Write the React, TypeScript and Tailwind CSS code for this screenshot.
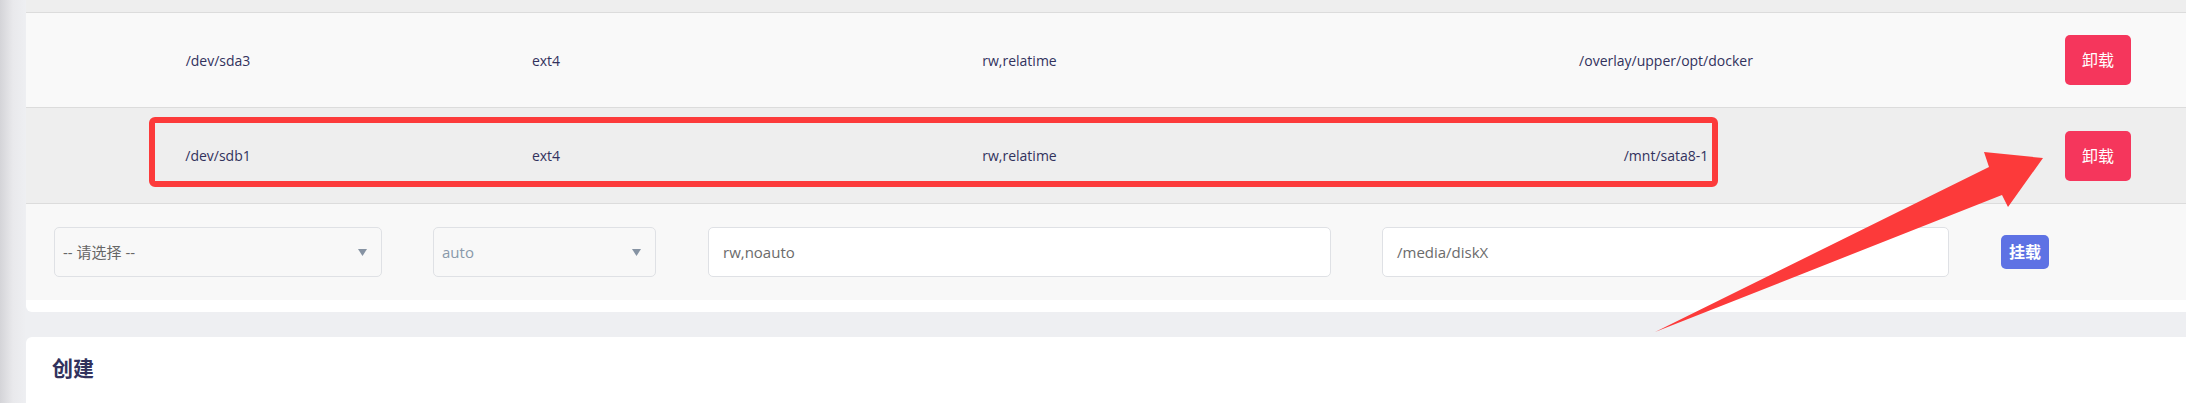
import { ReactNode } from "react";

const cols = "grid grid-cols-[384px_272px_675px_618px_246px] items-center";

const mounts = [
  { dev: "/dev/sda3", fs: "ext4", opts: "rw,relatime", path: "/overlay/upper/opt/docker", bg: "bg-[#f9f9f9]", h: "h-[95px]" },
  { dev: "/dev/sdb1", fs: "ext4", opts: "rw,relatime", path: "/mnt/sata8-1", bg: "bg-[#eeeeee]", h: "h-[96px]" },
];

function Caret() {
  return (
    <svg width="9" height="7" viewBox="0 0 9 7" className="shrink-0">
      <path d="M0 0h9L4.5 7z" fill="#8693a3" />
    </svg>
  );
}

function Select({ children, muted }: { children: ReactNode; muted?: boolean }) {
  return (
    <div className="flex h-[50px] items-center justify-between rounded-[5px] border border-[#dfe1e5] bg-[#f8f8f8] pl-[8px] pr-[14px]">
      <span className={muted ? "text-[15px] text-[#8898aa]" : "text-[15px] text-[#666666]"}>{children}</span>
      <Caret />
    </div>
  );
}

function Input({ value }: { value: string }) {
  return (
    <div className="flex h-[50px] items-center rounded-[5px] border border-[#dfe1e5] bg-white px-[14px] text-[15px] text-[#6b6b6b]">
      {value}
    </div>
  );
}

export default function App() {
  return (
    <div className="relative h-[403px] w-[2186px] overflow-hidden bg-[#eeeff2] font-['Open_Sans','Noto_Sans_CJK_SC',sans-serif] text-[#32325d]">
      <div className="flex h-full">
        <div className="w-[26px] shrink-0 bg-gradient-to-r from-[#d4d4d8] via-[#e9e9ec] to-[#eeeff2]" />

        <div className="flex w-[2195px] shrink-0 flex-col">
          <div className="rounded-b-[6px] bg-white pb-[12px]">
            <div className="h-[13px] border-b border-[#dcdcdc] bg-[#eeeeee]" />

            {mounts.map((m) => (
              <div key={m.dev} className={`${cols} ${m.h} ${m.bg} border-b border-[#dcdcdc] text-center text-[14px]`}>
                <div>{m.dev}</div>
                <div>{m.fs}</div>
                <div>{m.opts}</div>
                <div>{m.path}</div>
                <div className="flex justify-center">
                  <button className="h-[50px] rounded-[5px] bg-[#f5365c] px-[17px] text-[16px] text-white">卸载</button>
                </div>
              </div>
            ))}

            <div className={`${cols} h-[96px] bg-[#f8f8f8]`}>
              <div className="px-[28px]">
                <Select>-- 请选择 --</Select>
              </div>
              <div className="pl-[23px] pr-[26px]">
                <Select muted>auto</Select>
              </div>
              <div className="px-[26px]">
                <Input value="rw,noauto" />
              </div>
              <div className="pl-[25px] pr-[26px]">
                <Input value="/media/diskX" />
              </div>
              <div className="px-[26px]">
                <button className="h-[34px] rounded-[5px] bg-[#5e72e4] px-[8px] text-[16px] font-bold text-white">挂载</button>
              </div>
            </div>
          </div>

          <div className="h-[25px] shrink-0" />

          <div className="flex-1 rounded-t-[6px] bg-white pl-[26px] pt-[17px]">
            <h3 className="text-[21px] font-bold leading-[28px]">创建</h3>
          </div>
        </div>
      </div>

      <div className="pointer-events-none absolute left-[149px] top-[117px] h-[70px] w-[1569px] rounded-[6px] border-[6px] border-[#fc3a3a]" />

      <svg className="pointer-events-none absolute left-0 top-0" width="2186" height="403" viewBox="0 0 2186 403">
        <polygon points="1655,332 1989,167 1984,152 2043,158 2008,207 2002,195" fill="#fc3a3a" />
      </svg>
    </div>
  );
}
